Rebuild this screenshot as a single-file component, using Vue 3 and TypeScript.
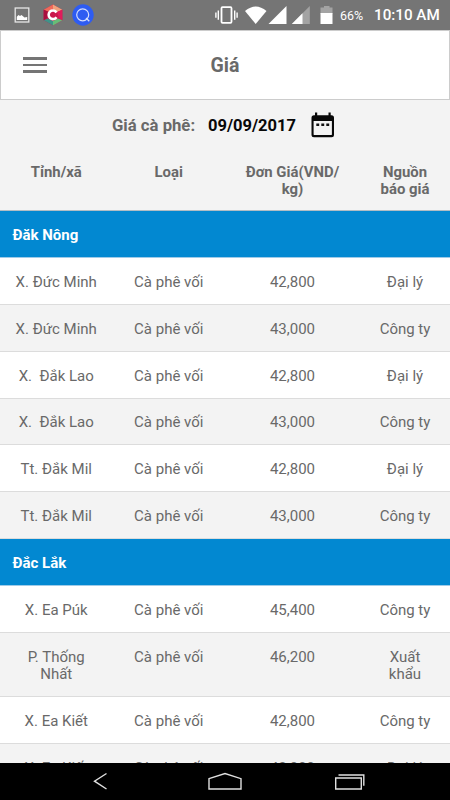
<script setup lang="ts">
interface Price {
  place: string
  kind: string
  price: string
  source: string
}
interface Region {
  name: string
  rows: Price[]
}

const row = (place: string, price: string, source: string): Price => ({
  place,
  kind: 'Cà phê vối',
  price,
  source,
})

const regions: Region[] = [
  {
    name: 'Đăk Nông',
    rows: [
      row('X. Đức Minh', '42,800', 'Đại lý'),
      row('X. Đức Minh', '43,000', 'Công ty'),
      row('X.  Đắk Lao', '42,800', 'Đại lý'),
      row('X.  Đắk Lao', '43,000', 'Công ty'),
      row('Tt. Đắk Mil', '42,800', 'Đại lý'),
      row('Tt. Đắk Mil', '43,000', 'Công ty'),
    ],
  },
  {
    name: 'Đắc Lắk',
    rows: [
      row('X. Ea Púk', '45,400', 'Công ty'),
      row('P. Thống Nhất', '46,200', 'Xuất khẩu'),
      row('X. Ea Kiết', '42,800', 'Công ty'),
      row('X. Ea Kiết', '43,000', 'Đại lý'),
    ],
  },
]
</script>

<template>
  <div class="screen">
    <div class="status">
      <div class="notices">
        <svg class="picture" width="16" height="16" viewBox="0 0 16 16">
          <rect x="1.2" y="1" width="13.6" height="14" fill="none" stroke="#e6e6e6" stroke-width="1.3" />
          <path d="M2.8 13V9.8L4.5 8L6 9L7.5 8L10.5 10.5L13.2 10V13Z" fill="#fff" />
        </svg>
        <svg class="hex" width="20" height="22" viewBox="0 0 20 22">
          <path d="M10 .5L19.3 5.7V16.3L10 21.5L.7 16.3V5.7Z" fill="#c9184a" />
          <path d="M10 .5L19.3 5.7L14 8L10 5Z" fill="#f0a27c" />
          <path d="M10 .5L.7 5.7L6 8L10 5Z" fill="#ef6a5a" />
          <path d="M.7 5.7L6 8L4 14L.7 16.3Z" fill="#a90f3f" />
          <path d="M19.3 5.7L14 8L16 14L19.3 16.3Z" fill="#e01b5b" />
          <path d="M.7 16.3L5 14.5L10 17V21.5Z" fill="#3f9389" />
          <path d="M19.3 16.3L15 14.5L10 17V21.5Z" fill="#67bd78" />
          <path d="M13.5 8.4A4.3 4.3 0 1 0 13.5 13.2" fill="none" stroke="#fff" stroke-width="2.6" />
        </svg>
        <svg class="search" width="22" height="22" viewBox="0 0 22 22">
          <circle cx="11" cy="11" r="10.7" fill="#2e5cf2" />
          <circle cx="10.7" cy="10.8" r="6" fill="none" stroke="#d5defd" stroke-width="1.2" />
          <path d="M14 14L17.3 17.2" stroke="#d5defd" stroke-width="1.3" />
        </svg>
      </div>
      <div class="signals">
        <svg width="120" height="20" viewBox="0 0 120 20">
          <g fill="none" stroke="#fff" stroke-width="1.4">
            <rect x="6.5" y="2.2" width="10" height="15.6" rx="1" stroke-width="1.8" />
            <path d="M3.3 5.5V14.7M.9 7.5V12.7M19.7 5.5V14.7M22.1 7.5V12.7" />
          </g>
          <path d="M30 6Q40.7 -3.2 51.5 6L40.7 19Z" fill="#fff" />
          <path d="M71.5 1V19H53.5Z" fill="#fff" />
          <path d="M94.8 1V19H76.8Z" fill="#a3a3a3" />
          <path d="M87.5 8.3V19H76.8Z" fill="#fff" />
          <path d="M105.5 2.5H109V1H114.5V2.5H117.5V9H105.5Z" fill="#a3a3a3" />
          <path d="M105.5 8H117.5V19H105.5Z" fill="#fff" />
        </svg>
        <span class="percent">66%</span>
        <span class="clock">10:10 AM</span>
      </div>
    </div>

    <header class="bar">
      <button class="menu" aria-label="Menu"><i></i><i></i><i></i></button>
      <h1>Giá</h1>
    </header>

    <div class="date">
      <span class="label">Giá cà phê:</span>
      <span class="day">09/09/2017</span>
      <svg width="24" height="26" viewBox="0 0 24 26">
        <path
          fill="#080808"
          fill-rule="evenodd"
          d="M4 .5H6.2V3.2H17.5V.5H19.7V3.2H20.5Q23 3.2 23 5.7V22.7Q23 25.2 20.5 25.2H3Q.5 25.2 .5 22.7V5.7Q.5 3.2 3 3.2H4ZM2.6 8.9V22.2Q2.6 23.1 3.5 23.1H20Q20.9 23.1 20.9 22.2V8.9Z"
        />
        <path d="M5.3 11.5H8.2V14H5.3ZM10.3 11.5H13.2V14H10.3ZM15.3 11.5H18.2V14H15.3Z" fill="#111" />
      </svg>
    </div>

    <main class="table">
      <div class="row head">
        <span>Tỉnh/xã</span>
        <span>Loại</span>
        <span>Đơn Giá(VND/<br />kg)</span>
        <span>Nguồn báo giá</span>
      </div>
      <section v-for="region in regions" :key="region.name">
        <h2>{{ region.name }}</h2>
        <div v-for="(item, i) in region.rows" :key="i" class="row" :class="{ shaded: i % 2 === 1 }">
          <span>{{ item.place }}</span>
          <span>{{ item.kind }}</span>
          <span>{{ item.price }}</span>
          <span>{{ item.source }}</span>
        </div>
      </section>
    </main>

    <nav class="nav">
      <svg width="450" height="37" viewBox="0 0 450 37" fill="none" stroke="#e0e0e0" stroke-width="1.4">
        <path d="M106.5 10.5L94.5 18.2L106.5 26" />
        <path d="M209 15.7L225 10.5L241 15.7V26H209Z" />
        <path d="M335.7 15H361.3V26H335.7ZM338.5 12H363.8V22.7" />
      </svg>
    </nav>
  </div>
</template>

<style>
body {
  margin: 0;
  overflow: hidden;
}
</style>

<style scoped>
.screen {
  width: 450px;
  height: 800px;
  display: flex;
  flex-direction: column;
  overflow: hidden;
  background: #f3f3f3;
  color: #696969;
  font-family: Roboto, sans-serif;
}
.status {
  flex: none;
  height: 30px;
  box-sizing: border-box;
  padding: 0 9px 0 14px;
  display: flex;
  justify-content: space-between;
  background: #757575;
  color: #fff;
}
.notices,
.signals {
  display: flex;
  align-items: center;
}
.hex {
  margin-left: 13px;
}
.search {
  margin-left: 9px;
}
.percent {
  width: 24px;
  margin-left: 5px;
  font-size: 12.5px;
  white-space: nowrap;
}
.clock {
  margin-left: 10px;
  width: 67px;
  font-size: 15.2px;
  font-weight: 500;
  white-space: nowrap;
}
.bar {
  flex: none;
  height: 70px;
  box-sizing: border-box;
  display: grid;
  grid-template-columns: 68px 1fr 68px;
  align-items: center;
  border: 1px solid #ccc;
  background: #fff;
}
.menu {
  display: flex;
  flex-direction: column;
  gap: 4px;
  width: 24px;
  margin: 0 0 0 22px;
  padding: 0;
  border: 0;
  background: none;
}
.menu i {
  height: 2.6px;
  background: #757575;
}
h1 {
  margin: 1px 0 0;
  text-align: center;
  font-size: 19.5px;
  font-weight: 700;
}
.date {
  flex: none;
  height: 50px;
  padding-left: 112px;
  display: flex;
  align-items: center;
  font-size: 16.5px;
  font-weight: 700;
}
.label {
  width: 96px;
  font-size: 16.7px;
  white-space: nowrap;
}
.day {
  width: 103px;
  color: #080808;
  white-space: nowrap;
}
.table {
  flex: 1;
  min-height: 0;
  overflow: hidden;
}
.row {
  display: grid;
  grid-template-columns: 25% 25% 30% 20%;
  padding: 15.9px 0 12.37px;
  border-bottom: 1px solid #dcdcdc;
  background: #fff;
  font-size: 15px;
  line-height: 17.6px;
  text-align: center;
}
.row span {
  padding: 0 12px;
  white-space: pre-wrap;
}
.shaded {
  background: #f3f3f3;
}
.head {
  height: 46.3px;
  padding: 13.9px 0 0;
  border-bottom-color: #b3bdc4;
  background: #f3f3f3;
  font-size: 14.9px;
  font-weight: 700;
}
h2 {
  margin: 0;
  height: 46.85px;
  box-sizing: border-box;
  padding: 15.5px 12.5px 0;
  border-bottom: 1px solid #9fcbe8;
  background: #0288d1;
  color: #fff;
  font-size: 15px;
  font-weight: 700;
  line-height: 17.6px;
}
.nav {
  flex: none;
  height: 37px;
  background: #000;
}
.nav svg {
  display: block;
}
</style>
